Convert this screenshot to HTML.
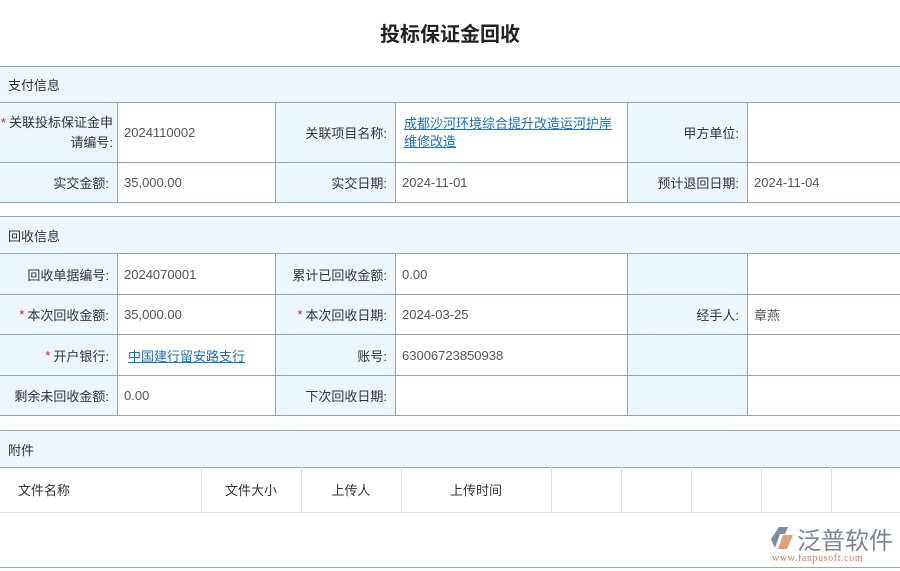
<!DOCTYPE html><html><head><meta charset="utf-8"><style>
body{margin:0;width:900px;height:571px;background:#fff;font-family:"Liberation Sans","Noto Sans CJK SC",sans-serif;font-size:13px;color:#333;position:relative;overflow:hidden}
.a{position:absolute;box-sizing:border-box}
.h{left:0;width:900px;background:#eef5fd;border-top:1px solid #8aaabb;border-bottom:1px solid #8aaabb;padding-left:8px;display:flex;align-items:center}
.l{background:#eef6fd;text-align:right;padding-right:8px;display:flex;align-items:center;justify-content:flex-end;border-left:1px solid #8aaabb;border-top:1px solid #8aaabb}
.v{background:#fff;padding-left:6px;display:flex;align-items:center;border-left:1px solid #8aaabb;border-top:1px solid #8aaabb;color:#555}
.f{border-left:none}
.b{border-bottom:1px solid #8aaabb}
.r{color:#d22;margin-right:3px}
a{color:#1f6fb5;text-decoration:underline}
.t{border-right:1px solid #e2e2e2;border-bottom:1px solid #e2e2e2;display:flex;align-items:center}
</style></head><body>
<div class="a" style="left:0;top:18px;width:900px;text-align:center;font-size:20px;font-weight:bold;color:#222">投标保证金回收</div>
<div class="a h" style="top:66px;height:37px">支付信息</div>
<div class="a l f" style="left:0;top:102px;width:117px;height:60px;line-height:20px;padding-right:4px"><span><span class="r">*</span>关联投标保证金申请编号:</span></div>
<div class="a v" style="left:117px;top:102px;width:158px;height:60px">2024110002</div>
<div class="a l" style="left:275px;top:102px;width:120px;height:60px">关联项目名称:</div>
<div class="a v" style="left:395px;top:102px;width:232px;height:60px;line-height:18px;padding-left:8px;padding-right:10px"><a>成都沙河环境综合提升改造运河护岸维修改造</a></div>
<div class="a l" style="left:627px;top:102px;width:120px;height:60px">甲方单位:</div>
<div class="a v" style="left:747px;top:102px;width:153px;height:60px"></div>
<div class="a l f b" style="left:0;top:162px;width:117px;height:41px">实交金额:</div>
<div class="a v b" style="left:117px;top:162px;width:158px;height:41px">35,000.00</div>
<div class="a l b" style="left:275px;top:162px;width:120px;height:41px">实交日期:</div>
<div class="a v b" style="left:395px;top:162px;width:232px;height:41px">2024-11-01</div>
<div class="a l b" style="left:627px;top:162px;width:120px;height:41px">预计退回日期:</div>
<div class="a v b" style="left:747px;top:162px;width:153px;height:41px">2024-11-04</div>

<div class="a h" style="top:216px;height:38px">回收信息</div>
<div class="a l f" style="left:0;top:253px;width:117px;height:41px">回收单据编号:</div>
<div class="a v" style="left:117px;top:253px;width:158px;height:41px">2024070001</div>
<div class="a l" style="left:275px;top:253px;width:120px;height:41px">累计已回收金额:</div>
<div class="a v" style="left:395px;top:253px;width:232px;height:41px">0.00</div>
<div class="a l" style="left:627px;top:253px;width:120px;height:41px"></div>
<div class="a v" style="left:747px;top:253px;width:153px;height:41px"></div>
<div class="a l f" style="left:0;top:294px;width:117px;height:40px"><span class="r">*</span>本次回收金额:</div>
<div class="a v" style="left:117px;top:294px;width:158px;height:40px">35,000.00</div>
<div class="a l" style="left:275px;top:294px;width:120px;height:40px"><span class="r">*</span>本次回收日期:</div>
<div class="a v" style="left:395px;top:294px;width:232px;height:40px">2024-03-25</div>
<div class="a l" style="left:627px;top:294px;width:120px;height:40px">经手人:</div>
<div class="a v" style="left:747px;top:294px;width:153px;height:40px">章燕</div>
<div class="a l f" style="left:0;top:334px;width:117px;height:41px"><span class="r">*</span>开户银行:</div>
<div class="a v" style="left:117px;top:334px;width:158px;height:41px;padding-left:10px"><a>中国建行留安路支行</a></div>
<div class="a l" style="left:275px;top:334px;width:120px;height:41px">账号:</div>
<div class="a v" style="left:395px;top:334px;width:232px;height:41px">63006723850938</div>
<div class="a l" style="left:627px;top:334px;width:120px;height:41px"></div>
<div class="a v" style="left:747px;top:334px;width:153px;height:41px"></div>
<div class="a l f b" style="left:0;top:375px;width:117px;height:41px">剩余未回收金额:</div>
<div class="a v b" style="left:117px;top:375px;width:158px;height:41px">0.00</div>
<div class="a l b" style="left:275px;top:375px;width:120px;height:41px">下次回收日期:</div>
<div class="a v b" style="left:395px;top:375px;width:232px;height:41px"></div>
<div class="a l b" style="left:627px;top:375px;width:120px;height:41px"></div>
<div class="a v b" style="left:747px;top:375px;width:153px;height:41px"></div>

<div class="a h" style="top:430px;height:38px">附件</div>
<div class="a t" style="left:0;top:467px;width:202px;height:46px;padding-left:18px">文件名称</div>
<div class="a t" style="left:201px;top:467px;width:101px;height:46px;justify-content:center">文件大小</div>
<div class="a t" style="left:301px;top:467px;width:101px;height:46px;justify-content:center">上传人</div>
<div class="a t" style="left:401px;top:467px;width:151px;height:46px;justify-content:center">上传时间</div>
<div class="a t" style="left:551px;top:467px;width:71px;height:46px"></div>
<div class="a t" style="left:621px;top:467px;width:71px;height:46px"></div>
<div class="a t" style="left:691px;top:467px;width:71px;height:46px"></div>
<div class="a t" style="left:761px;top:467px;width:71px;height:46px"></div>
<div class="a t" style="left:831px;top:467px;width:69px;height:46px;border-right:none"></div>

<svg class="a" style="left:770px;top:526px" width="26" height="24" viewBox="0 0 26 24"><path d="M9 1h9l-3 7h-5l-5 14L1 13z" fill="#7e8aa0"/><path d="M13 9h10l-6 14h-9z" fill="#e0a07a"/></svg>
<div class="a" style="left:797px;top:521px;font-size:24px;color:#7e8496;letter-spacing:0px">泛普软件</div>
<div class="a" style="left:772px;top:553px;font-size:10px;color:#d08060;font-family:'Liberation Serif',serif;letter-spacing:0.6px">www.fanpusoft.com</div>
<div class="a" style="left:0;top:567px;width:900px;height:1px;background:#8aaabb"></div>
</body></html>
